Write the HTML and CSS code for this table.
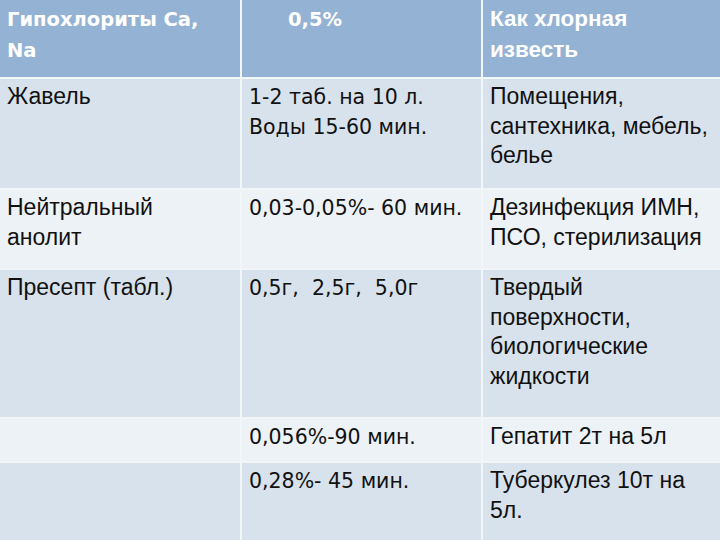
FILE: index.html
```html
<!DOCTYPE html>
<html lang="ru">
<head>
<meta charset="utf-8">
<link rel="stylesheet" href="styles.css">
</head>
<body>
<div class="table">
  <div class="cell head gothic">Гипохлориты Ca, Na</div>
  <div class="cell head gothic indent">0,5%</div>
  <div class="cell head">Как хлорная известь</div>

  <div class="cell dark first">Жавель</div>
  <div class="cell dark gothic">1-2 таб. на 10 л.<br>Воды 15-60 мин.</div>
  <div class="cell dark">Помещения, сантехника, мебель, белье</div>

  <div class="cell light first">Нейтральный анолит</div>
  <div class="cell light gothic">0,03-0,05%- 60 мин.</div>
  <div class="cell light">Дезинфекция ИМН, ПСО, стерилизация</div>

  <div class="cell dark first">Пресепт (табл.)</div>
  <div class="cell dark gothic">0,5г,&nbsp; 2,5г,&nbsp; 5,0г</div>
  <div class="cell dark">Твердый поверхности, биологические жидкости</div>

  <div class="cell light first"></div>
  <div class="cell light gothic">0,056%-90 мин.</div>
  <div class="cell light">Гепатит 2т на 5л</div>

  <div class="cell dark first"></div>
  <div class="cell dark gothic">0,28%- 45 мин.</div>
  <div class="cell dark">Туберкулез 10т на 5л.</div>
</div>
</body>
</html>
```

FILE: styles.css
```css
html, body {
  margin: 0;
  padding: 0;
  background: #f3f6f9;
}
.table {
  width: 720px;
  height: 540px;
  display: grid;
  grid-template-columns: 240px 239px 239px;
  grid-template-rows: 77px 109px 78px 147px 42px 77px;
  gap: 2px 2px;
  background: #f3f6f9;
  overflow: hidden;
}
.cell {
  font-family: "Liberation Sans", Arial, sans-serif;
  font-size: 23px;
  line-height: 29.5px;
  color: #111;
  padding: 3px 6px 0 7px;
  box-sizing: border-box;
}
.first {
  padding-right: 24px;
}
.gothic {
  font-family: "DejaVu Sans", sans-serif;
  font-size: 20.5px;
  padding-top: 4px;
}
.head {
  background: #93b2d4;
  color: #fff;
  font-weight: bold;
  font-size: 22.5px;
  line-height: 31px;
  padding-top: 3px;
}
.head.gothic {
  font-size: 19.5px;
  padding-top: 4px;
}
.indent {
  padding-left: 46px;
}
.dark {
  background: #d8e2ec;
}
.light {
  background: #edf2f7;
}
```
